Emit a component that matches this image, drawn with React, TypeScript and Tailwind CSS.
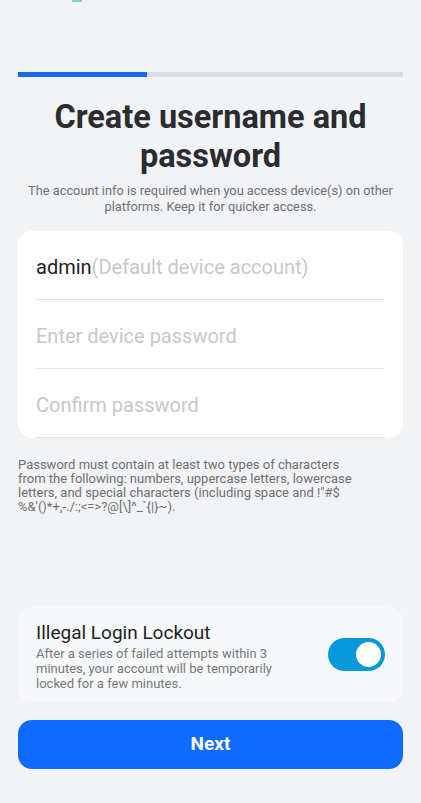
import { useState } from 'react';

const fontStack = { fontFamily: 'Roboto, "Noto Sans", "Liberation Sans", sans-serif' };

const passwordRule =
  'Password must contain at least two types of characters from the following: numbers, uppercase letters, lowercase letters, and special characters (including space and !"#$ %&\'()*+,-./:;<=>?@[\\]^_`{|}~).';

function Field({ value, hint }: { value?: string; hint: string }) {
  return (
    <div className="flex h-[69px] items-center border-b border-[#e3e4e6] pt-[3px]">
      {value && <span className="text-[20px] text-[#1f2023]">{value}</span>}
      <span className="text-[20px] text-[#c7c8ca]">{hint}</span>
    </div>
  );
}

export default function App() {
  const [lockout, setLockout] = useState(true);

  return (
    <div
      className="flex h-[803px] w-[421px] flex-col overflow-hidden bg-[#f2f3f5] px-[18px]"
      style={fontStack}
    >
      {/* Status bar remnant */}
      <div className="h-[72px]">
        <div className="ml-[54px] h-[2px] w-[10px] bg-[#7fd6c0]" />
      </div>

      {/* Progress */}
      <div className="flex h-[5px] w-full">
        <div className="w-[129px] bg-[#1769f4]" />
        <div className="flex-1 bg-[#dcdde0]" />
      </div>

      {/* Heading */}
      <h1 className="mt-[21px] text-center text-[32.5px] font-bold leading-[39px] text-[#2a2c2f]">
        Create username and
        <br />
        password
      </h1>
      <p className="mt-[7px] text-center text-[12.8px] leading-[15.5px] text-[#6e7075]">
        The account info is required when you access device(s) on other platforms. Keep it for quicker access.
      </p>

      {/* Credentials card */}
      <div className="mt-[17px] overflow-hidden rounded-[14px] bg-white px-[18px]">
        <Field value="admin" hint="(Default device account)" />
        <Field hint="Enter device password" />
        <Field hint="Confirm password" />
      </div>

      <p className="mt-[20px] w-[348px] text-[13px] leading-[14px] text-[#6e7075]">{passwordRule}</p>

      <div className="flex-1" />

      {/* Lockout card */}
      <div className="flex h-[95px] items-center rounded-[14px] bg-[#f7f8f9] px-[18px]">
        <div className="flex-1 pr-[40px] pt-[4px]">
          <div className="text-[19px] leading-[22px] text-[#222326]">Illegal Login Lockout</div>
          <div className="mt-[2px] text-[13px] leading-[15px] text-[#76787c]">
            After a series of failed attempts within 3 minutes, your account will be temporarily locked for a few
            minutes.
          </div>
        </div>
        <button
          type="button"
          onClick={() => setLockout(!lockout)}
          className={`ml-[12px] flex h-[33px] w-[57px] shrink-0 items-center rounded-full p-[2px] ${
            lockout ? 'justify-end bg-[#0898dc]' : 'justify-start bg-[#d5d6d8]'
          }`}
        >
          <span className="h-[29px] w-[29px] rounded-full border-[2px] border-[#0898dc] bg-white" />
        </button>
      </div>

      {/* Next */}
      <button
        type="button"
        className="mb-[34px] mt-[18px] h-[49px] w-full shrink-0 rounded-[14px] bg-[#0e6bfd] text-[19px] font-bold text-white"
      >
        Next
      </button>
    </div>
  );
}
